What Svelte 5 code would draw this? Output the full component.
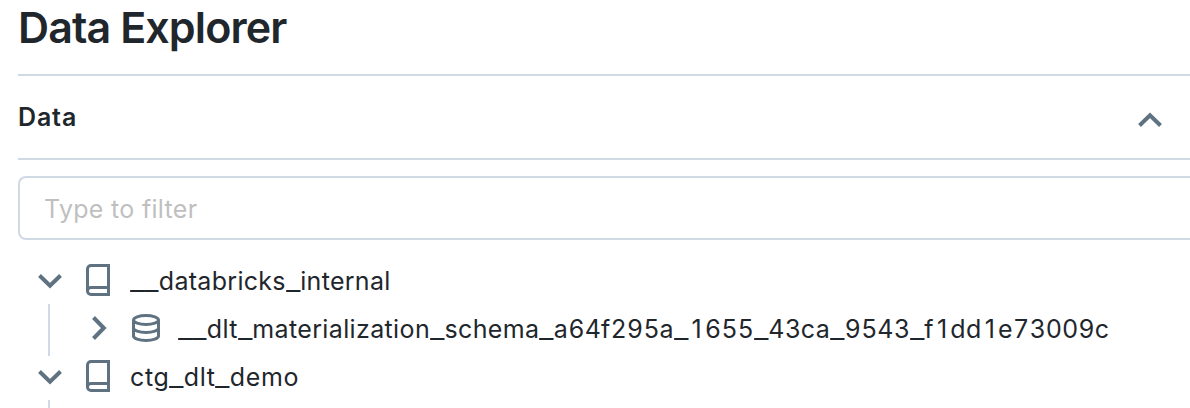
<script>
  const rows = [
    { name: '__databricks_internal', kind: 'catalog', spacing: 0.3 },
    { name: '__dlt_materialization_schema_a64f295a_1655_43ca_9543_f1dd1e73009c', kind: 'schema', spacing: 0.37 },
    { name: 'ctg_dlt_demo', kind: 'catalog', spacing: 0.6 },
    { name: '', kind: 'child', spacing: 0 }
  ];
  const pieces = (name) => name.match(/_|\d|[^_\d]+/g) ?? [];
</script>

<main>
  <h1>Data Explorer</h1>
  <section class="panel">
    <h2>Data</h2>
    <svg width="24" height="16" viewBox="0 0 24 16"><path d="M1.5 13.5 12 3.2l10.5 10.3" class="chevron" /></svg>
  </section>
  <div class="filter"><input type="text" placeholder="Type to filter" aria-label="Filter" /></div>
  <div class="tree">
    {#each rows as row}
      <div class="row {row.kind}">
        {#if row.kind === 'child'}
          <span class="guide"></span>
        {:else if row.kind === 'catalog'}
          <svg class="toggle" width="24" height="16" viewBox="0 0 24 16"><path d="M1.5 2.5 12 12.8 22.5 2.5" class="chevron" /></svg>
          <svg class="kind-icon" width="24" height="32" viewBox="0 0 24 32">
            <path d="M22.5 1.5H5A3.5 3.5 0 0 0 1.5 5v22A3.5 3.5 0 0 0 5 30.5h17.5zM1.5 27A3.5 3.5 0 0 1 5 23.5h17.5" class="outline" />
          </svg>
        {:else}
          <span class="guide"></span>
          <svg class="toggle" width="16" height="24" viewBox="0 0 16 24"><path d="M2.5 1.5 12.8 12 2.5 22.5" class="chevron" /></svg>
          <svg class="kind-icon" width="28" height="28" viewBox="0 0 28 28">
            <ellipse cx="14" cy="6" rx="12.5" ry="4.5" class="outline" />
            <path d="M1.5 6v16c0 2.5 5.6 4.5 12.5 4.5s12.5-2 12.5-4.5V6M1.5 14c0 2.5 5.6 4.5 12.5 4.5s12.5-2 12.5-4.5" class="outline" />
          </svg>
        {/if}
        <span class="label" style="letter-spacing: {row.spacing}px">{#each pieces(row.name) as piece}<span class:bar={piece === '_'} class:digit={/\d/.test(piece)}>{piece}</span>{/each}</span>
      </div>
    {/each}
  </div>
</main>

<style>
  :global(body) { background: #fff; overflow: hidden; }
  main {
    box-sizing: border-box;
    height: 408px;
    padding-left: 18px;
    overflow: hidden;
    font-family: Inter, 'Liberation Sans', sans-serif;
    color: #1f272d;
  }
  h1 {
    box-sizing: border-box;
    height: 74px;
    margin: 0;
    font-size: 43px;
    line-height: 54px;
    font-weight: 600;
    letter-spacing: -0.9px;
  }
  .panel {
    box-sizing: border-box;
    height: 86px;
    padding: 4px 28px 0 0;
    display: flex;
    align-items: center;
    justify-content: space-between;
    border-top: 2px solid #cfdae5;
    border-bottom: 2px solid #cfdae5;
  }
  .panel svg { margin-top: 1px; }
  h2 { margin: 0; padding-bottom: 4px; font-size: 25px; line-height: 32px; font-weight: 600; letter-spacing: 0.85px; }
  .filter {
    box-sizing: border-box;
    height: 64px;
    margin-top: 16px;
    border: 2px solid #cfdae5;
    border-right: 0;
    border-radius: 8px 0 0 8px;
    display: flex;
  }
  input {
    flex: 1;
    padding: 2px 0 0 24px;
    border: 0;
    outline: 0;
    background: none;
    font: 400 25px/32px Inter, 'Liberation Sans', sans-serif;
    letter-spacing: 0.3px;
  }
  input::placeholder { color: #bfbfbf; opacity: 1; }
  .tree { padding-top: 16px; }
  .row { height: 48px; display: flex; align-items: center; white-space: nowrap; }
  .catalog { padding-left: 20px; }
  .schema, .child { padding-left: 30px; }
  .toggle, .kind-icon { flex: none; }
  .catalog .toggle { margin-top: 2px; }
  .catalog .kind-icon { margin-left: 24px; }
  .catalog .label { margin-left: 20px; }
  .guide { width: 2px; height: 52px; margin-top: 4px; flex: none; background: #cfdae5; }
  .schema .toggle { margin-left: 41px; }
  .schema .kind-icon { margin-left: 25px; }
  .schema .label { margin-left: 18px; }
  .label { padding-top: 2px; font-size: 25px; line-height: 32px; }
  .bar { display: inline-block; width: 14.4px; transform: scaleX(1.27); transform-origin: left; letter-spacing: 0; }
  .digit { display: inline-block; width: 16.35px; text-align: center; letter-spacing: 0; }
  .chevron { fill: none; stroke: #5f7281; stroke-width: 4; }
  .outline { fill: none; stroke: #5f7281; stroke-width: 3; }
</style>
